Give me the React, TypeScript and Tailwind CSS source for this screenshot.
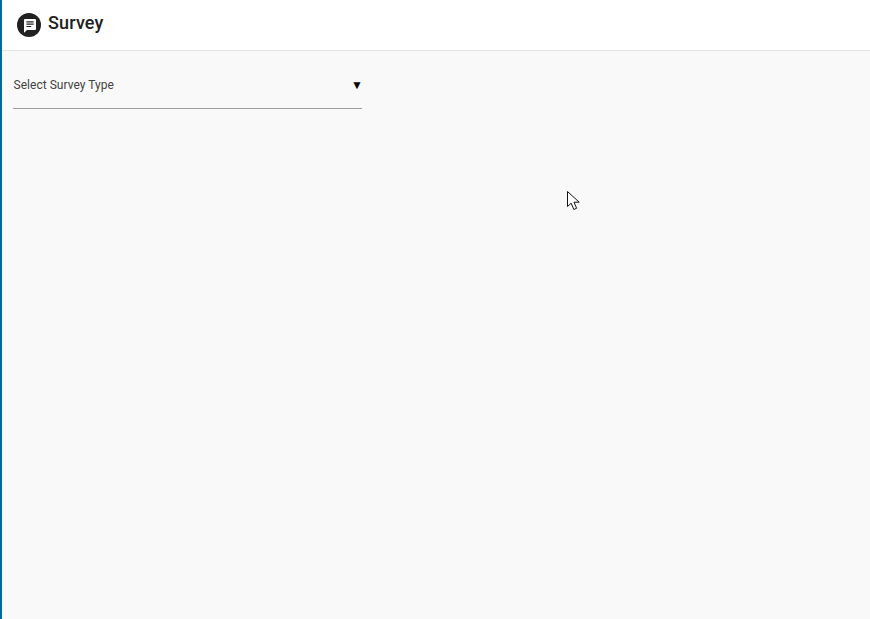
import React from 'react';

const SurveyIcon: React.FC = () => (
  <svg width="24" height="24" viewBox="0 0 24 24" className="shrink-0">
    <circle cx="12" cy="12" r="12" fill="#212121" />
    <path d="M8 6h10a1 1 0 0 1 1 1v9a1 1 0 0 1-1 1H10l-3 2.8V7a1 1 0 0 1 1-1z" fill="#fff" />
    <path d="M9.4 8.3h7.2v1.1H9.4zM9.4 10.6h7.2v1.1H9.4zM9.4 12.9h4.8v1.1H9.4z" fill="#212121" />
  </svg>
);

const Cursor: React.FC = () => (
  <svg width="14" height="20" viewBox="0 0 14 20" className="absolute left-[565px] top-[191px]">
    <path d="M0.5 0.5V15.5L4.2 12.2L6.8 18.5L9.6 17.3L7 11.2H12.2Z" fill="#fff" stroke="#111" strokeWidth="1" strokeLinejoin="miter" />
  </svg>
);

export default function App() {
  return (
    <div className="relative h-[619px] w-[870px] overflow-hidden bg-[#f9f9f9] border-l-2 border-[#006d94] font-['Roboto',sans-serif]">
      <header className="flex h-[51px] items-center gap-[7px] border-b border-[#e3e3e3] bg-white pl-[15px]">
        <SurveyIcon />
        <h1 className="pb-[4px] text-[18px] font-medium leading-none tracking-[0.15px] text-[#212121]">Survey</h1>
      </header>
      <div className="ml-[11px] flex h-[58px] w-[349px] items-center justify-between border-b border-[#9e9e9e] pl-[0.5px] pt-[11px]">
        <span className="text-[12px] tracking-[0.03px] text-[#424242]">Select Survey Type</span>
        <span className="-mr-[1px] text-[12px] leading-none text-black">▼</span>
      </div>
      <Cursor />
    </div>
  );
}
